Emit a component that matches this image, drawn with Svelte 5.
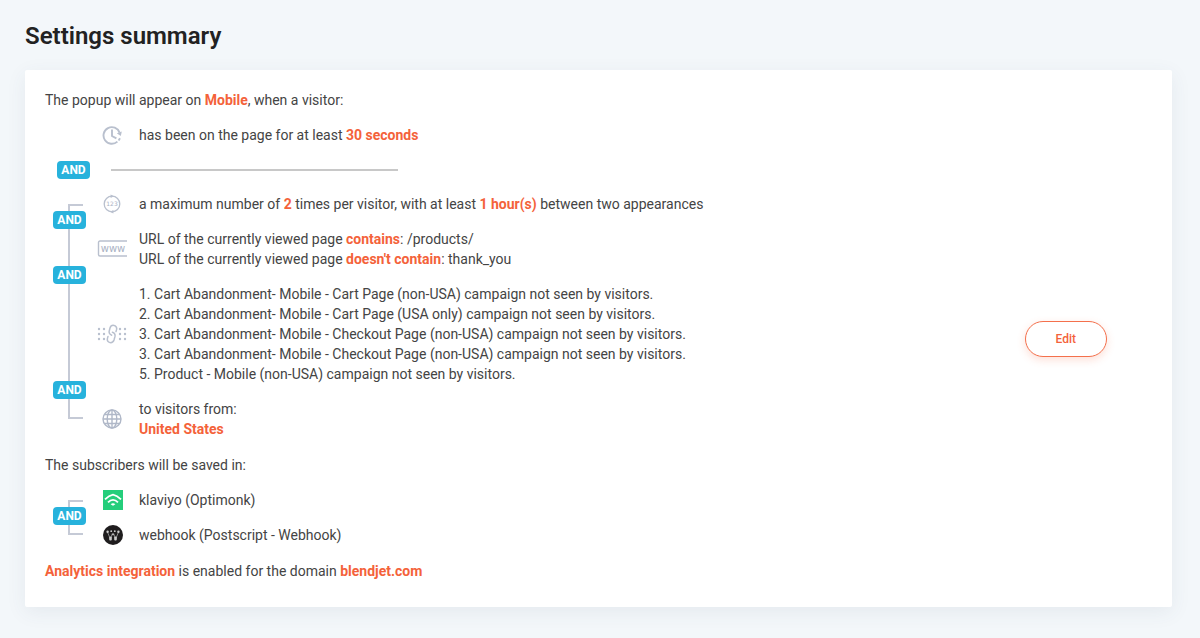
<script>
  const campaigns = [
    { no: 1, name: 'Cart Abandonment- Mobile - Cart Page (non-USA)' },
    { no: 2, name: 'Cart Abandonment- Mobile - Cart Page (USA only)' },
    { no: 3, name: 'Cart Abandonment- Mobile - Checkout Page (non-USA)' },
    { no: 3, name: 'Cart Abandonment- Mobile - Checkout Page (non-USA)' },
    { no: 5, name: 'Product - Mobile (non-USA)' }
  ]

  const urlRules = [
    { rule: 'contains', value: '/products/' },
    { rule: "doesn't contain", value: 'thank_you' }
  ]

  const dotColumns = [2, 7, 23, 28]
  const dotRows = [5, 10, 15]
</script>

<main>
  <h1>Settings summary</h1>

  <section class="card">
    <div class="summary">
      <p>The popup will appear on <b>Mobile</b>, when a visitor:</p>

      <div class="row">
        <div class="rail"></div>
        <div class="icon">
          <svg width="20" height="20" viewBox="0 0 20 20" fill="none" stroke="#b9c0ce" stroke-width="1.9">
            <path d="M17.6 7.6A8.3 8.3 0 1 0 15.4 16.6" />
            <path d="M10 4.5V11L14.4 13.4" />
            <path d="M14.8 8.2L19.8 6.4L18.8 11Z" fill="#b9c0ce" stroke="none" />
            <path d="M16.6 15.4L18 13.2" />
          </svg>
        </div>
        <div class="text">has been on the page for at least <b>30 seconds</b></div>
      </div>

      <div class="separator">
        <span class="badge">AND</span>
        <hr />
      </div>

      <div class="group">
        <div class="row">
          <div class="rail"><span class="badge">AND</span></div>
          <div class="icon">
            <svg width="20" height="20" viewBox="0 0 20 20" fill="none" stroke="#b9c0ce">
              <circle cx="10" cy="10" r="7.8" stroke-width="1.3" />
              <path d="M8.6 .4L12 2.2L8.6 4ZM11.4 16L8 17.8L11.4 19.6Z" fill="#b9c0ce" stroke="none" />
              <text class="glyphs" x="10" y="12.2" font-size="6" text-anchor="middle" fill="#a9b2c4" stroke="none">123</text>
            </svg>
          </div>
          <div class="text">
            a maximum number of <b>2</b> times per visitor, with at least <b>1 hour(s)</b> between two appearances
          </div>
        </div>

        <div class="row">
          <div class="rail"><span class="badge">AND</span></div>
          <div class="icon">
            <svg width="30" height="20" viewBox="0 0 30 20" fill="none" stroke="#b9c0ce">
              <path d="M30 2H3Q1.5 2 1.5 3.5V15.5Q1.5 17 3 17H30" stroke-width="1.4" />
              <text class="glyphs" x="16" y="13" font-size="10" text-anchor="middle" fill="#a9b2c4" stroke="none">www</text>
            </svg>
          </div>
          <div class="text">
            {#each urlRules as { rule, value }}
              <div>URL of the currently viewed page <b>{rule}</b>: {value}</div>
            {/each}
          </div>
        </div>

        <div class="row">
          <div class="rail"><span class="badge">AND</span></div>
          <div class="icon">
            <svg width="30" height="20" viewBox="0 0 30 20">
              {#each dotColumns as cx}
                {#each dotRows as cy}
                  <circle {cx} {cy} r="1.2" fill="#b9c0ce" />
                {/each}
              {/each}
              <g fill="none" stroke="#b9c0ce" stroke-width="1.5" stroke-linecap="round">
                <path d="M14.6 11.2Q11.6 10 12.2 7.2L13 4Q14 .8 17 1.4Q20.2 2.4 19.6 5.4L19 7.6" />
                <path d="M15.4 8.2Q18.6 9.4 18 12.4L17 16Q16 19 13 18.6Q9.8 17.6 10.4 14.6L11 12.4" />
              </g>
            </svg>
          </div>
          <div class="text">
            {#each campaigns as { no, name }}
              <div>{no}. {name} campaign not seen by visitors.</div>
            {/each}
          </div>
        </div>

        <div class="row">
          <div class="rail"></div>
          <div class="icon">
            <svg width="20" height="20" viewBox="0 0 20 20" fill="none" stroke="#b0b8c8" stroke-width="1.4">
              <circle cx="10" cy="10" r="9" />
              <ellipse cx="10" cy="10" rx="4.8" ry="9" />
              <path d="M10 1V19M1 10H19M2.4 5.5H17.6M2.4 14.5H17.6" />
            </svg>
          </div>
          <div class="text">
            <div>to visitors from:</div>
            <b>United States</b>
          </div>
        </div>
      </div>

      <p>The subscribers will be saved in:</p>

      <div class="group">
        <div class="row">
          <div class="rail"><span class="badge">AND</span></div>
          <div class="icon">
            <svg class="logo" width="20" height="20" viewBox="0 0 20 20">
              <rect width="20" height="20" fill="#24ce7b" />
              <g fill="none" stroke="#fff" stroke-width="1.8">
                <path d="M2 9.4Q6 5.4 10 4.6Q14 5.4 18 9.4" />
                <path d="M5 12.4Q10 7.4 15 12.4" />
              </g>
              <path d="M7.6 14.2Q10 12.2 12.4 14.2L10 15.8Z" fill="#fff" />
            </svg>
          </div>
          <div class="text">klaviyo (Optimonk)</div>
        </div>

        <div class="row">
          <div class="rail"></div>
          <div class="icon">
            <svg class="logo" width="20" height="20" viewBox="0 0 20 20">
              <circle cx="10" cy="10" r="10" fill="#1f1d1e" />
              <path d="M4.6 7.4L7.4 14L9.4 8.4M10.6 8.4L12.6 14L15.4 7.4" fill="none" stroke="#888" stroke-width="1" />
              <g fill="#ccc">
                <circle cx="4.6" cy="6.8" r="1.2" />
                <circle cx="8.2" cy="6.2" r=".9" />
                <circle cx="11.8" cy="6.2" r=".9" />
                <circle cx="15.4" cy="6.8" r="1.2" />
                <circle cx="10" cy="9.4" r=".9" />
                <rect x="6.2" y="11.6" width="2.6" height="4" rx="1" />
                <rect x="11.2" y="11.6" width="2.6" height="4" rx="1" />
              </g>
            </svg>
          </div>
          <div class="text">webhook (Postscript - Webhook)</div>
        </div>
      </div>

      <p><b>Analytics integration</b> is enabled for the domain <b>blendjet.com</b></p>
    </div>

    <button type="button">Edit</button>
  </section>
</main>

<style>
  :global(body) {
    background: #f3f7fa;
  }
  main {
    padding: 20px 28px 31px 25px;
    font-family: Roboto, 'Liberation Sans', sans-serif;
    font-size: 14px;
    line-height: 20px;
    color: #444;
  }
  h1 {
    margin: 0 0 18px;
    font-size: 24px;
    line-height: 32px;
    font-weight: 600;
    color: #222;
  }
  .card {
    display: flex;
    align-items: center;
    justify-content: space-between;
    gap: 20px;
    padding: 20px 65px 20px 20px;
    background: #fff;
    border-radius: 2px;
    box-shadow: 0 5px 20px rgba(60, 80, 100, 0.08);
  }
  .summary {
    padding-bottom: 6px;
  }
  p {
    margin: 0 0 15px;
  }
  p:last-child {
    margin-bottom: 0;
  }
  b {
    font-weight: 700;
    color: #f4623a;
  }
  .group {
    display: flex;
    flex-direction: column;
    gap: 15px;
    margin-bottom: 16px;
  }
  .row {
    display: flex;
  }
  .rail {
    position: relative;
    flex: none;
    width: 52px;
  }
  .icon {
    display: flex;
    align-items: center;
    justify-content: center;
    flex: none;
    width: 30px;
    margin-right: 12px;
  }
  .logo {
    margin-left: 2px;
  }
  .glyphs {
    font-family: 'DejaVu Sans', sans-serif;
  }
  .badge {
    width: 33px;
    border-radius: 4px;
    background: #27b2dc;
    color: #fff;
    font-size: 12px;
    line-height: 18px;
    font-weight: 700;
    text-align: center;
  }
  /* bracket that ties the rows of a group together */
  .group .rail::before {
    content: '';
    position: absolute;
    top: 0;
    bottom: -15px;
    left: 23px;
    width: 13px;
    border-left: 2px solid #c5cad6;
  }
  .group .row:first-child .rail::before {
    top: 50%;
    border-top: 2px solid #c5cad6;
  }
  .group .row:last-child .rail::before {
    bottom: 50%;
    border-bottom: 2px solid #c5cad6;
  }
  .rail .badge {
    position: absolute;
    z-index: 1;
    left: 8px;
    bottom: -15px;
  }
  .separator {
    display: flex;
    align-items: center;
    gap: 21px;
    height: 49px;
    padding-left: 12px;
  }
  hr {
    width: 287px;
    margin: 0;
    border: 0;
    border-top: 2px solid #c8c8c8;
  }
  button {
    flex: none;
    padding: 7px 30px;
    border: 1px solid #f4704c;
    border-radius: 18px;
    background: #fff;
    box-shadow: 0 3px 8px rgba(244, 98, 58, 0.2);
    color: #f4623a;
    font-family: inherit;
    font-size: 12px;
    line-height: 20px;
    font-weight: 500;
    cursor: pointer;
  }
</style>
